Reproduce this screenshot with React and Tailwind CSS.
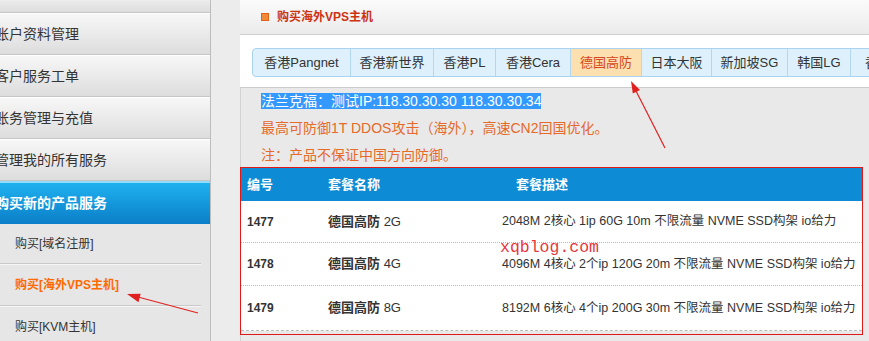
import React from "react";

const FONT = "font-['Liberation_Sans','Noto_Sans_CJK_SC',sans-serif]";

const sideItems = ["账户资料管理", "客户服务工单", "账务管理与充值", "管理我的所有服务"];

const tabs = [
  { label: "香港Pangnet", cls: "w-[98px]" },
  { label: "香港新世界", cls: "w-[83px]" },
  { label: "香港PL", cls: "w-[62px]" },
  { label: "香港Cera", cls: "w-[75px]" },
  { label: "德国高防", cls: "w-[71px]", active: true },
  { label: "日本大阪", cls: "w-[70px]" },
  { label: "新加坡SG", cls: "w-[76px]" },
  { label: "韩国LG", cls: "w-[63px]" },
  { label: "香港CN2", cls: "w-[80px]" },
];

const rows = [
  { id: "1477", name: "2G", desc: "2048M 2核心 1ip 60G 10m 不限流量 NVME SSD构架 io给力", h: "h-[42px]" },
  { id: "1478", name: "4G", desc: "4096M 4核心 2个ip 120G 20m 不限流量 NVME SSD构架 io给力", h: "h-[43px]" },
  { id: "1479", name: "8G", desc: "8192M 6核心 4个ip 200G 30m 不限流量 NVME SSD构架 io给力", h: "h-[44px]" },
];

function SideItem({ children, h = "h-[42px]" }) {
  return (
    <div
      className={`${h} shrink-0 flex items-center pl-0 border-t border-t-white border-b border-b-[#c6c6c6] bg-[linear-gradient(to_bottom,#f7f7f7,#dddddd)] text-[14px] text-[#333] overflow-hidden whitespace-nowrap`}
    >
      <span className="-ml-[5px]">{children}</span>
    </div>
  );
}

function SubItem({ children, active, h = "h-[41px]" }) {
  return (
    <div className={`${h} shrink-0 flex flex-col`}>
      <div
        className={`flex-1 flex items-center pl-[15px] text-[12px] whitespace-nowrap ${
          active ? "text-[#ff6a00] font-bold" : "text-[#333]"
        }`}
      >
        {children}
      </div>
      <div className="w-[201px] h-[1px] bg-[#c9c9c9]" />
      <div className="w-[201px] h-[1px] bg-[#f6f6f6]" />
    </div>
  );
}

export default function App() {
  return (
    <div className={`relative w-[869px] h-[341px] overflow-hidden flex bg-[#e9e9e9] ${FONT}`}>
      {/* Sidebar */}
      <div className="w-[211px] shrink-0 flex flex-col border-r border-r-[#bdbdbd] bg-[#e6e6e6]">
        <div className="h-[13px] shrink-0 border-b border-b-[#c6c6c6] bg-[linear-gradient(to_bottom,#ececec,#dddddd)]" />
        {sideItems.map((t) => (
          <SideItem key={t}>{t}</SideItem>
        ))}
        <div className="h-[43px] shrink-0 flex items-center border-t-2 border-t-[#8fdcfb] bg-[linear-gradient(to_bottom,#1fb1f0,#0b7ec8)] text-white font-bold text-[14px] whitespace-nowrap">
          <span className="-ml-[5px]">购买新的产品服务</span>
        </div>
        <SubItem>购买[域名注册]</SubItem>
        <SubItem active h="h-[42px]">购买[海外VPS主机]</SubItem>
        <SubItem>购买[KVM主机]</SubItem>
      </div>

      {/* textured gap */}
      <div className="w-[29px] shrink-0 bg-[#ececec]" />

      {/* Main */}
      <div className="flex-1 min-w-0 flex flex-col overflow-hidden">
        <div className="h-[35px] shrink-0 flex items-center pl-[21px] gap-[8px] border-b border-b-[#cfcfcf] bg-[linear-gradient(to_bottom,#fbfbfb,#ebebeb)]">
          <div className="w-[8px] h-[8px] border border-[#e2621a] bg-[#f08a38]" />
          <span className="text-[12px] font-bold text-[#cc3311]">购买海外VPS主机</span>
        </div>

        <div className="h-[53px] shrink-0 bg-white border-b border-b-[#cccccc] pt-[13px] pl-[12px]">
          <div className="flex h-[29px] w-max rounded-l-[4px] border border-[#a9d3ee] bg-[#ddf0fb] overflow-hidden">
            {tabs.map((t, i) => (
              <div
                key={t.label}
                className={`${t.cls} shrink-0 flex items-center justify-center text-[13px] whitespace-nowrap ${
                  i < tabs.length - 1 ? "border-r border-r-[#b3d7ee]" : ""
                } ${t.active ? "bg-[#fde0b0] text-[#d8461c]" : "text-[#333]"}`}
              >
                {t.label}
              </div>
            ))}
          </div>
        </div>

        <div className="flex-1 flex flex-col border-l border-l-[#d2d2d2]">
          <div className="pl-[20px] text-[14px] leading-[27px] text-[#e66a2a]">
            <div>
              <span className="bg-[#3399ff] text-white">法兰克福：测试IP:118.30.30.30 118.30.30.34 </span>
            </div>
            <div>最高可防御1T DDOS攻击（海外），高速CN2回国优化。</div>
            <div>注：产品不保证中国方向防御。</div>
          </div>

          <div className="-mt-[1px] w-[621px] bg-white border-b border-dashed border-b-[#bbbbbb]">
            <div className="h-[33px] grid grid-cols-[87px_174px_1fr] items-center bg-[#0d8cd5] text-white font-bold text-[13px]">
              <div className="pl-[6px]">编号</div>
              <div>套餐名称</div>
              <div className="pl-[14px]">套餐描述</div>
            </div>
            {rows.map((r, i) => (
              <div
                key={r.id}
                className={`${r.h} grid grid-cols-[87px_174px_1fr] items-center text-[#333] ${
                  i < rows.length - 1 ? "border-b border-dotted border-b-[#bdbdbd]" : ""
                }`}
              >
                <div className="pl-[6px] text-[12px] font-bold">{r.id}</div>
                <div className="text-[13px] whitespace-nowrap">
                  <span className="font-bold">德国高防</span> {r.name}
                </div>
                <div className="text-[12.5px] whitespace-nowrap">{r.desc}</div>
              </div>
            ))}
          </div>
        </div>
      </div>

      {/* annotations */}
      <div className="absolute left-[240px] top-[167px] w-[623px] h-[168px] border border-[#e01818] pointer-events-none" />
      <div className="absolute left-[500px] top-[238px] font-['Liberation_Mono',monospace] text-[16.5px] leading-[20px] text-[#e8363a]">
        xqblog.com
      </div>
      <svg className="absolute left-0 top-0 pointer-events-none" width="869" height="341">
        <line x1="665" y1="148" x2="635" y2="89" stroke="#e02020" strokeWidth="1.2" />
        <polygon points="631,81 640,89.9 632.8,93.5" fill="#e02020" />
        <line x1="198" y1="313" x2="138" y2="297" stroke="#e02020" strokeWidth="1.2" />
        <polygon points="127,294 140.6,293.8 138.5,302.3" fill="#e02020" />
      </svg>
    </div>
  );
}
